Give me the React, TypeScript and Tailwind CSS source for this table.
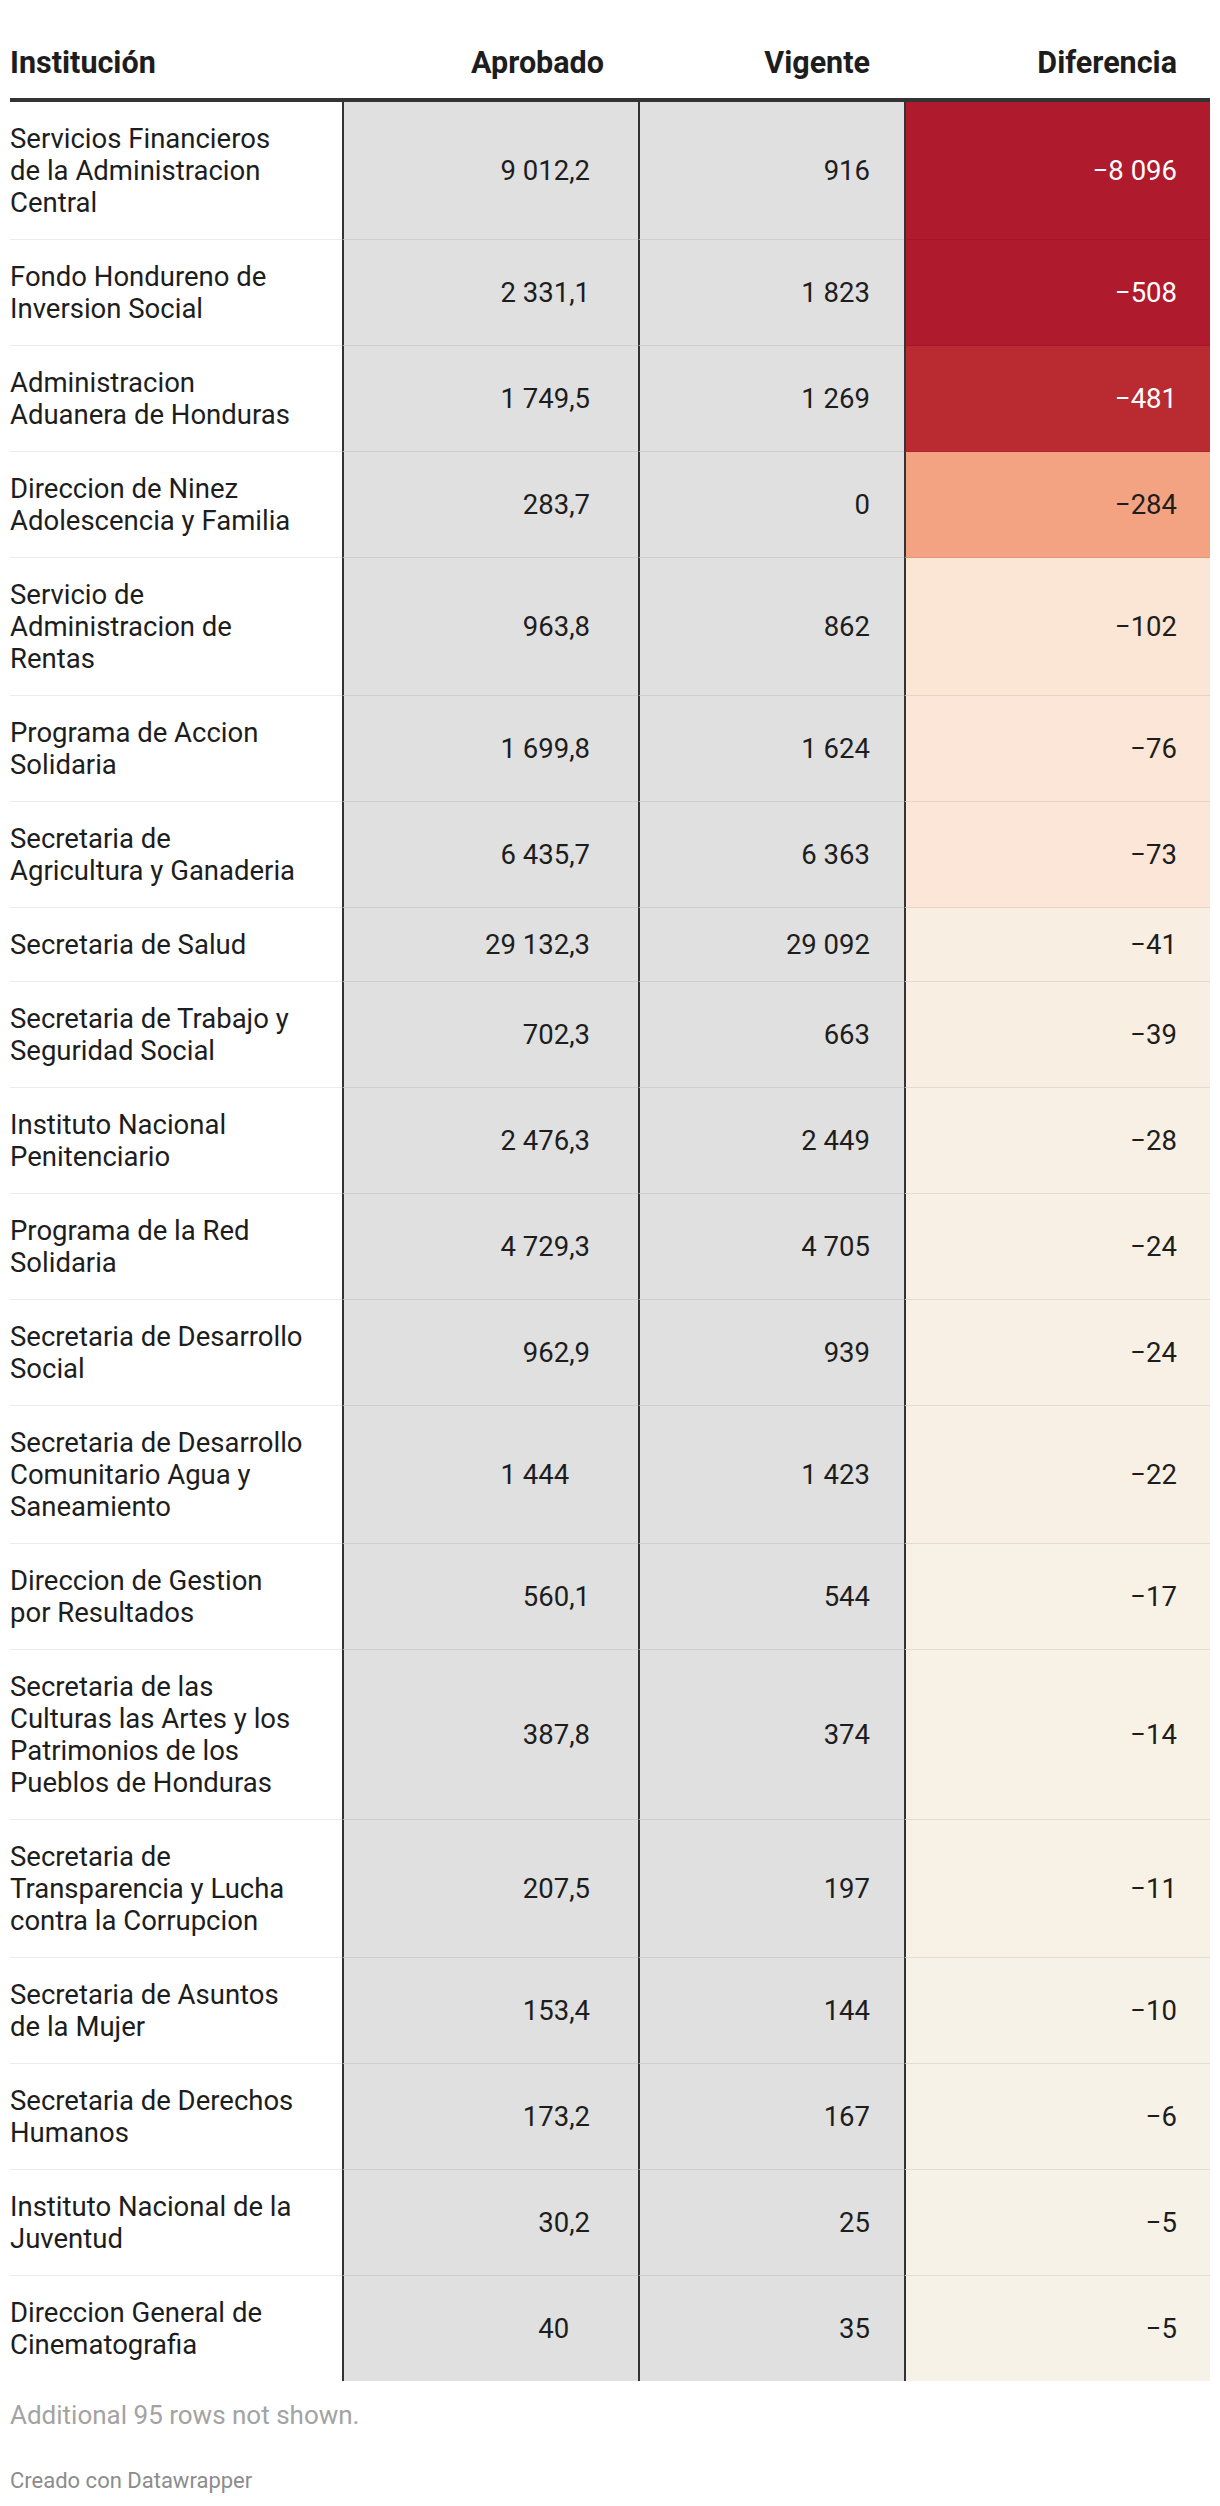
const rows = [
  { name: ['Servicios Financieros', 'de la Administracion', 'Central'], ap: '9 012,2', vi: '916', df: '−8 096', bg: 'bg-[#b01a2d]', light: true },
  { name: ['Fondo Hondureno de', 'Inversion Social'], ap: '2 331,1', vi: '1 823', df: '−508', bg: 'bg-[#b01a2d]', light: true },
  { name: ['Administracion', 'Aduanera de Honduras'], ap: '1 749,5', vi: '1 269', df: '−481', bg: 'bg-[#b92a31]', light: true },
  { name: ['Direccion de Ninez', 'Adolescencia y Familia'], ap: '283,7', vi: '0', df: '−284', bg: 'bg-[#f4a382]', light: false },
  { name: ['Servicio de', 'Administracion de', 'Rentas'], ap: '963,8', vi: '862', df: '−102', bg: 'bg-[#fbe5d5]', light: false },
  { name: ['Programa de Accion', 'Solidaria'], ap: '1 699,8', vi: '1 624', df: '−76', bg: 'bg-[#fbe6d7]', light: false },
  { name: ['Secretaria de', 'Agricultura y Ganaderia'], ap: '6 435,7', vi: '6 363', df: '−73', bg: 'bg-[#fbe6d7]', light: false },
  { name: ['Secretaria de Salud'], ap: '29 132,3', vi: '29 092', df: '−41', bg: 'bg-[#f9eee2]', light: false },
  { name: ['Secretaria de Trabajo y', 'Seguridad Social'], ap: '702,3', vi: '663', df: '−39', bg: 'bg-[#f9eee2]', light: false },
  { name: ['Instituto Nacional', 'Penitenciario'], ap: '2 476,3', vi: '2 449', df: '−28', bg: 'bg-[#f8f0e4]', light: false },
  { name: ['Programa de la Red', 'Solidaria'], ap: '4 729,3', vi: '4 705', df: '−24', bg: 'bg-[#f8f0e4]', light: false },
  { name: ['Secretaria de Desarrollo', 'Social'], ap: '962,9', vi: '939', df: '−24', bg: 'bg-[#f8f0e4]', light: false },
  { name: ['Secretaria de Desarrollo', 'Comunitario Agua y', 'Saneamiento'], ap: '1 444', vi: '1 423', df: '−22', bg: 'bg-[#f8f0e4]', light: false },
  { name: ['Direccion de Gestion', 'por Resultados'], ap: '560,1', vi: '544', df: '−17', bg: 'bg-[#f7f1e6]', light: false },
  { name: ['Secretaria de las', 'Culturas las Artes y los', 'Patrimonios de los', 'Pueblos de Honduras'], ap: '387,8', vi: '374', df: '−14', bg: 'bg-[#f7f1e6]', light: false },
  { name: ['Secretaria de', 'Transparencia y Lucha', 'contra la Corrupcion'], ap: '207,5', vi: '197', df: '−11', bg: 'bg-[#f7f1e6]', light: false },
  { name: ['Secretaria de Asuntos', 'de la Mujer'], ap: '153,4', vi: '144', df: '−10', bg: 'bg-[#f7f2e7]', light: false },
  { name: ['Secretaria de Derechos', 'Humanos'], ap: '173,2', vi: '167', df: '−6', bg: 'bg-[#f7f2e7]', light: false },
  { name: ['Instituto Nacional de la', 'Juventud'], ap: '30,2', vi: '25', df: '−5', bg: 'bg-[#f7f2e7]', light: false },
  { name: ['Direccion General de', 'Cinematografia'], ap: '40', vi: '35', df: '−5', bg: 'bg-[#f7f2e7]', light: false },
];

const cols = 'grid grid-cols-[332px_296px_266px_306px]';

export default function App() {
  return (
    <div className="bg-white w-[1220px] px-[10px] pb-[14px] font-['Roboto',sans-serif] text-[#1d1d1d]">
      {/* header */}
      <div className={`${cols} border-b-4 border-[#333333] text-[30.5px] leading-[32px] font-bold`}>
        <div className="pt-[47px] pb-[19px] text-left">Institución</div>
        <div className="pt-[47px] pb-[19px] pr-[34px] text-right">Aprobado</div>
        <div className="pt-[47px] pb-[19px] pr-[34px] text-right">Vigente</div>
        <div className="pt-[47px] pb-[19px] pr-[33px] text-right">Diferencia</div>
      </div>

      {/* body */}
      <div className="text-[27.5px] leading-[32px]">
        {rows.map((r, i) => {
          const last = i === rows.length - 1;
          const line = last ? '' : 'border-b border-black/[0.08]';
          const hasDec = r.ap.includes(',');
          return (
            <div key={i} className={cols}>
              <div className={`pt-[21px] pb-[20px] ${line}`}>
                {r.name.map((n, j) => (
                  <div key={j}>{n}</div>
                ))}
              </div>
              <div className={`flex items-center justify-end pr-[48px] bg-[#e0e0e0] border-l-2 border-l-[#333333] ${line}`}>
                <span>
                  {r.ap}
                  {!hasDec && <span className="invisible">,0</span>}
                </span>
              </div>
              <div className={`flex items-center justify-end pr-[34px] bg-[#e0e0e0] border-l-2 border-l-[#333333] ${line}`}>
                {r.vi}
              </div>
              <div
                className={`flex items-center justify-end pr-[33px] ${r.bg} border-l-2 border-l-[#333333] ${line} ${r.light ? 'text-white' : ''}`}
              >
                {r.df}
              </div>
            </div>
          );
        })}
      </div>

      {/* notes */}
      <div className="mt-[19px] text-[26px] leading-[30px] text-[#a3a3a3]">Additional 95 rows not shown.</div>
      <div className="mt-[38px] text-[22px] leading-[26px] text-[#8c8c8c]">Creado con Datawrapper</div>
    </div>
  );
}
